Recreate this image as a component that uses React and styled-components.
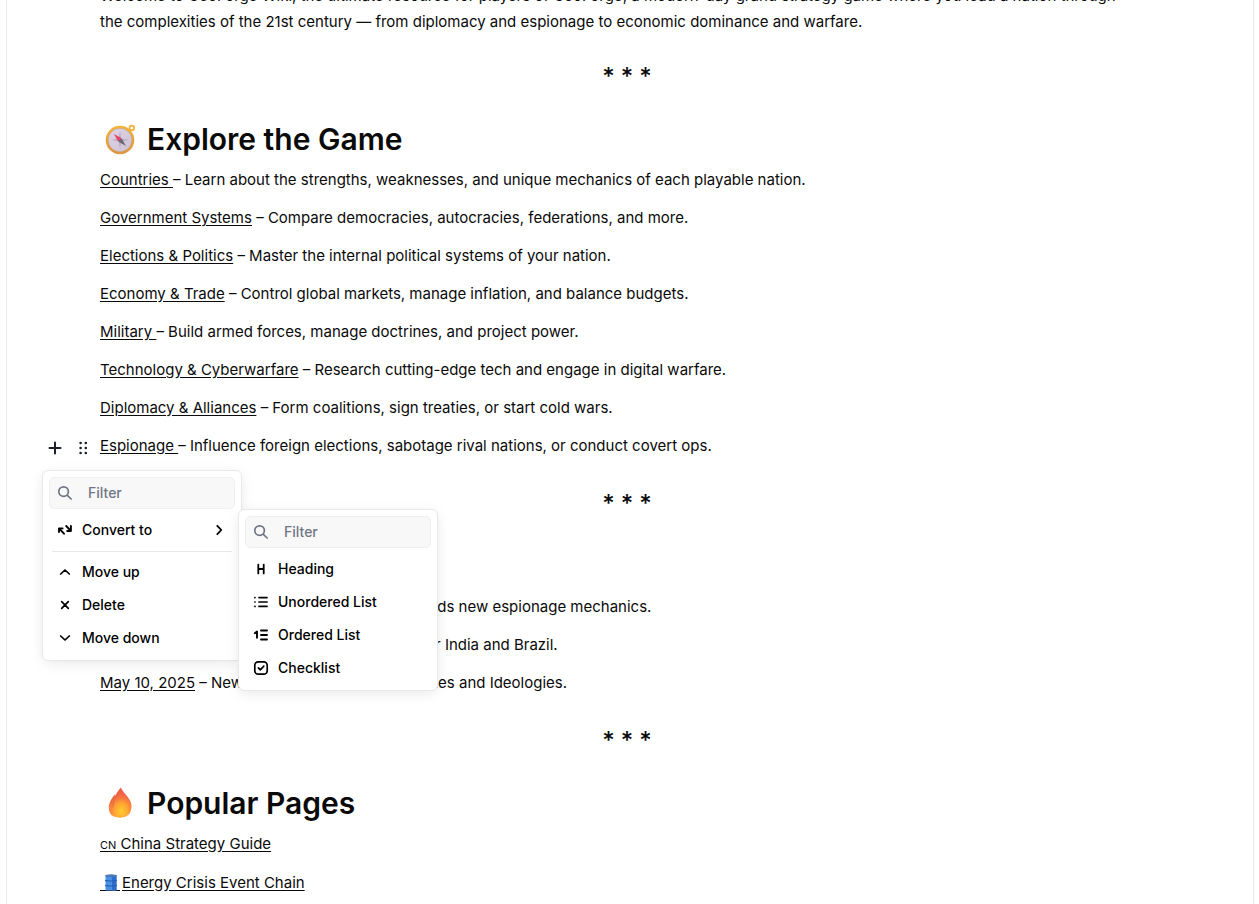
import React from "react";
import styled, { createGlobalStyle } from "styled-components";

const Global = createGlobalStyle`
  * { box-sizing: border-box; }
  body {
    margin: 0;
    background: #fff;
    color: #0a0a0a;
    font-family: Inter, "Liberation Sans", sans-serif;
    font-size: 15px;
    line-height: 26px;
  }
`;

const Page = styled.div`
  height: 100vh;
  overflow: hidden;
  padding: 0 5px 0 6px;
`;

const Editor = styled.main`
  display: flow-root;
  min-height: 100vh;
  border: 1px solid #e8e8ea;
  border-width: 0 1px;
  padding: 0 99px 0 93px;
`;

const Article = styled.article`
  margin-top: -17px;
`;

const Paragraph = styled.p`
  margin: 0;
  padding-right: 16px;
`;

const Delimiter = styled.div`
  display: flex;
  justify-content: center;
  gap: 6px;
  margin: 29px 0 30px;
  font-size: 24px;
  font-weight: 500;
`;

const Heading = styled.h2`
  display: flex;
  align-items: center;
  gap: 7px;
  margin: 0 0 9px;
  font-size: 30px;
  line-height: 38px;
  font-weight: 600;
`;

const Blocks = styled.div`
  display: flex;
  flex-direction: column;
  gap: 12px;
  padding-bottom: 3px;
`;

const Block = styled.div`
  position: relative;
`;

const PageLink = styled.a`
  color: inherit;
  white-space: pre-wrap;
  text-decoration: underline;
  text-underline-offset: 2px;
`;

const FlagCode = styled.span`
  font-size: 11px;
`;

const Toolbar = styled.div`
  position: absolute;
  left: -57px;
  top: 0;
  display: flex;
  align-items: center;
  gap: 4px;
  height: 30px;
`;

const ToolButton = styled.button`
  display: flex;
  align-items: center;
  justify-content: center;
  width: 24px;
  height: 24px;
  padding: 0;
  border: 0;
  background: none;
  color: #1d202b;
`;

const Popover = styled.div`
  position: absolute;
  z-index: 1;
  left: ${(p) => p.$left}px;
  top: ${(p) => p.$top}px;
  width: 200px;
  padding: 6px;
  border: 1px solid #e8e8eb;
  border-radius: 6px;
  background: #fff;
  box-shadow: 0 3px 15px -3px rgba(13, 20, 33, 0.13);
  font-size: 14px;
  font-weight: 500;
`;

const Search = styled.label`
  display: flex;
  align-items: center;
  gap: 15px;
  height: 32px;
  padding: 0 7px;
  margin-bottom: 5px;
  border: 1px solid #f0f0f1;
  border-radius: 5px;
  background: #f8f8f8;
  color: #707684;
`;

const SearchInput = styled.input`
  min-width: 0;
  flex: 1;
  padding: 0;
  border: 0;
  outline: 0;
  background: none;
  font: inherit;
  color: inherit;
  &::placeholder { color: #707684; opacity: 1; }
`;

const Items = styled.div`
  display: flex;
  flex-direction: column;
  gap: 1px;
`;

const Item = styled.button`
  display: flex;
  align-items: center;
  gap: 9px;
  height: 32px;
  padding: 0 8px;
  border: 0;
  background: none;
  color: #000;
  font: inherit;
  text-align: left;
  span { flex: 1; }
`;

const Separator = styled.hr`
  width: 180px;
  height: 1px;
  margin: 4px 3px 3px;
  border: 0;
  background: #e8e8eb;
`;

const Icon = ({ children, size = 16, width = 2 }) => (
  <svg width={size} height={size} viewBox="0 0 16 16" fill="none" stroke="currentColor" strokeWidth={width} strokeLinecap="round" strokeLinejoin="round" aria-hidden="true">
    {children}
  </svg>
);

const icons = {
  search: <Icon width={1.7}><circle cx="6.6" cy="6.6" r="4.8" /><path d="M10.3 10.3 14.2 14" /></Icon>,
  convert: <Icon width={1.9}><path d="M2 10V6.400H5.600M2.300 6.700 7 11.700M13.900 4V9H10.200M13.600 8.700 9.200 4" /></Icon>,
  chevron: <Icon width={1.8}><path d="M6.3 3.8 10.3 8 6.3 12.2" /></Icon>,
  up: <Icon width={1.7}><path d="M3.7 10 8 6 12.3 10" /></Icon>,
  remove: <Icon width={1.7}><path d="M4.7 4.7 11.3 11.3M11.3 4.7 4.7 11.3" /></Icon>,
  down: <Icon width={1.7}><path d="M3.7 6 8 10 12.3 6" /></Icon>,
  heading: <Icon width={1.8}><path d="M5.300 3.6V12.400M10.700 3.6V12.400M5.300 8H10.700" /></Icon>,
  bullets: <Icon width={1.7}><path d="M6 3.600H14M6 8H14M6 12.400H14M1.9 3.600H2M1.9 8H2M1.9 12.400H2" /></Icon>,
  numbers: <Icon width={1.9}><path d="M8 3.500H14M8 8H14M8 12.500H14M1.8 6.200 4 4.500V10.800" /></Icon>,
  check: <Icon width={1.7}><rect x="1.8" y="1.8" width="12.4" height="12.4" rx="3.4" /><path d="M5.4 7.8 7.3 9.8 10.8 6.2" /></Icon>,
};

const Compass = () => (
  <svg width="40" height="38" viewBox="0 0 40 38" aria-hidden="true">
    <defs>
      <linearGradient id="brass" x1="0" y1="0" x2="0" y2="1"><stop stopColor="#f2b53c" /><stop offset="1" stopColor="#dd9440" /></linearGradient>
      <linearGradient id="dial" x1="0" y1="0" x2="1" y2="1"><stop stopColor="#ddd3e3" /><stop offset="1" stopColor="#cfc4d8" /></linearGradient>
    </defs>
    <circle cx="31.8" cy="8" r="2.3" fill="none" stroke="#eeb034" strokeWidth="1.7" />
    <circle cx="20" cy="20" r="14.3" fill="url(#brass)" />
    <circle cx="20" cy="20" r="11.8" fill="url(#dial)" stroke="#c99a6e" strokeWidth="0.5" />
    <path d="M20 11 20.900 19.100 29 20 20.900 20.900 20 29 19.100 20.900 11 20 19.100 19.100Z" fill="#a79eb0" />
    <path d="M14 14 21.500 18.200 18.200 21.500Z" fill="#e83e67" />
    <path d="M26 26 21.500 18.200 18.200 21.500Z" fill="#6c6472" />
  </svg>
);

const flameOutline = "M20.700 3.500C18 7 16.500 9 15 12L14.500 10.500C11.500 15 8.800 18.500 8.800 23.500C8.800 30 12.500 33.500 20 33.500C27.500 33.500 31.500 29 31.500 22C31.500 15 24 10 20.700 3.500Z";

const Flame = () => (
  <svg width="40" height="38" viewBox="0 0 40 38" aria-hidden="true">
    <defs>
      <linearGradient id="flame" x1="0" y1="0" x2="0" y2="1"><stop stopColor="#ee5a4c" /><stop offset="1" stopColor="#ff9238" /></linearGradient>
      <radialGradient id="glow" cx="0.55" cy="0.8" r="0.6"><stop stopColor="#ffce2e" /><stop offset="0.5" stopColor="#ffae30" stopOpacity="0.8" /><stop offset="1" stopColor="#fb6d45" stopOpacity="0" /></radialGradient>
    </defs>
    <path d={flameOutline} fill="url(#flame)" />
    <path d={flameOutline} fill="url(#glow)" />
    <path d="M20 7C16 13 12.500 17 13 23M14.500 12C12 16 11 17 10.800 20" fill="none" stroke="#d95e43" strokeWidth="0.9" opacity="0.7" />
  </svg>
);

const DrumSvg = styled.svg`
  vertical-align: -4px;
  margin-right: 2px;
`;

const Drum = () => (
  <DrumSvg width="20" height="19" viewBox="0 0 20 19" aria-hidden="true">
    <path d="M0 17.500H20" stroke="#0a0a0a" strokeWidth="1" />
    <path d="M5.500 2.500H16.500V17.500H5.500Z" fill="#4a92e4" />
    <path d="M12 2.500H16.500V17.500H12Z" fill="#2f6ccb" />
    <path d="M5 7.500Q11 8.500 17 7.500M5 12.500Q11 13.500 17 12.500" fill="none" stroke="#2860b0" strokeWidth="1.200" />
    <ellipse cx="11" cy="2.800" rx="6" ry="1.500" fill="#4b79b5" />
  </DrumSvg>
);

const pages = [
  ["Countries ", "– Learn about the strengths, weaknesses, and unique mechanics of each playable nation."],
  ["Government Systems", " – Compare democracies, autocracies, federations, and more."],
  ["Elections & Politics", " – Master the internal political systems of your nation."],
  ["Economy & Trade", " – Control global markets, manage inflation, and balance budgets."],
  ["Military ", "– Build armed forces, manage doctrines, and project power."],
  ["Technology & Cyberwarfare", " – Research cutting-edge tech and engage in digital warfare."],
  ["Diplomacy & Alliances", " – Form coalitions, sign treaties, or start cold wars."],
  ["Espionage ", "– Influence foreign elections, sabotage rival nations, or conduct covert ops."],
];

const updates = [
  ["May 24, 2025", " – Major game update 1.2.1 that adds new espionage mechanics."],
  ["May 18, 2025", " – Refreshed the country pages for India and Brazil."],
  ["May 10, 2025", " – New detailed articles on Countries and Ideologies."],
];

const Stars = () => (
  <Delimiter role="separator"><span>*</span><span>*</span><span>*</span></Delimiter>
);

const MenuItem = ({ icon, label, arrow }) => (
  <Item type="button" role="menuitem">{icons[icon]}<span>{label}</span>{arrow && icons.chevron}</Item>
);

const Filter = ({ label }) => (
  <Search>{icons.search}<SearchInput type="text" placeholder="Filter" aria-label={label} /></Search>
);

const BlockTools = () => (
  <>
    <Toolbar>
      <ToolButton type="button" aria-label="Add block"><Icon><path d="M8 2.500V13.500M2.500 8H13.500" /></Icon></ToolButton>
      <ToolButton type="button" aria-label="Block settings">
        <Icon width={2.6}><path d="M5.600 3V3.010M10.800 3V3.010M5.600 8V8.010M10.800 8V8.010M5.600 13V13.010M10.800 13V13.010" /></Icon>
      </ToolButton>
    </Toolbar>
    <Popover $left={-58} $top={37}>
      <Filter label="Filter actions" />
      <Items role="menu">
        <MenuItem icon="convert" label="Convert to" arrow />
        <Separator />
        <MenuItem icon="up" label="Move up" />
        <MenuItem icon="remove" label="Delete" />
        <MenuItem icon="down" label="Move down" />
      </Items>
    </Popover>
    <Popover $left={138} $top={76}>
      <Filter label="Filter block types" />
      <Items role="menu">
        <MenuItem icon="heading" label="Heading" />
        <MenuItem icon="bullets" label="Unordered List" />
        <MenuItem icon="numbers" label="Ordered List" />
        <MenuItem icon="check" label="Checklist" />
      </Items>
    </Popover>
  </>
);

export default function App() {
  return (
    <Page>
      <Global />
      <Editor>
        <Article>
          <Paragraph>
            Welcome to GeoForge Wiki, the ultimate resource for players of GeoForge, a modern-day grand strategy game where you lead a nation through the complexities of the 21st century — from diplomacy and espionage to economic dominance and warfare.
          </Paragraph>
          <Stars />
          <Heading><Compass />Explore the Game</Heading>
          <Blocks>
            {pages.map(([name, text]) => (
              <Block key={name}>
                <PageLink href="#">{name}</PageLink>{text}
                {name === "Espionage " && <BlockTools />}
              </Block>
            ))}
          </Blocks>
          <Stars />
          <Heading>Latest Updates</Heading>
          <Blocks>
            {updates.map(([date, text]) => (
              <Block key={date}><PageLink href="#">{date}</PageLink>{text}</Block>
            ))}
          </Blocks>
          <Stars />
          <Heading><Flame />Popular Pages</Heading>
          <Blocks>
            <Block><PageLink href="#"><FlagCode>CN</FlagCode> China Strategy Guide</PageLink></Block>
            <Block><PageLink href="#"><Drum />Energy Crisis Event Chain</PageLink></Block>
          </Blocks>
        </Article>
      </Editor>
    </Page>
  );
}
